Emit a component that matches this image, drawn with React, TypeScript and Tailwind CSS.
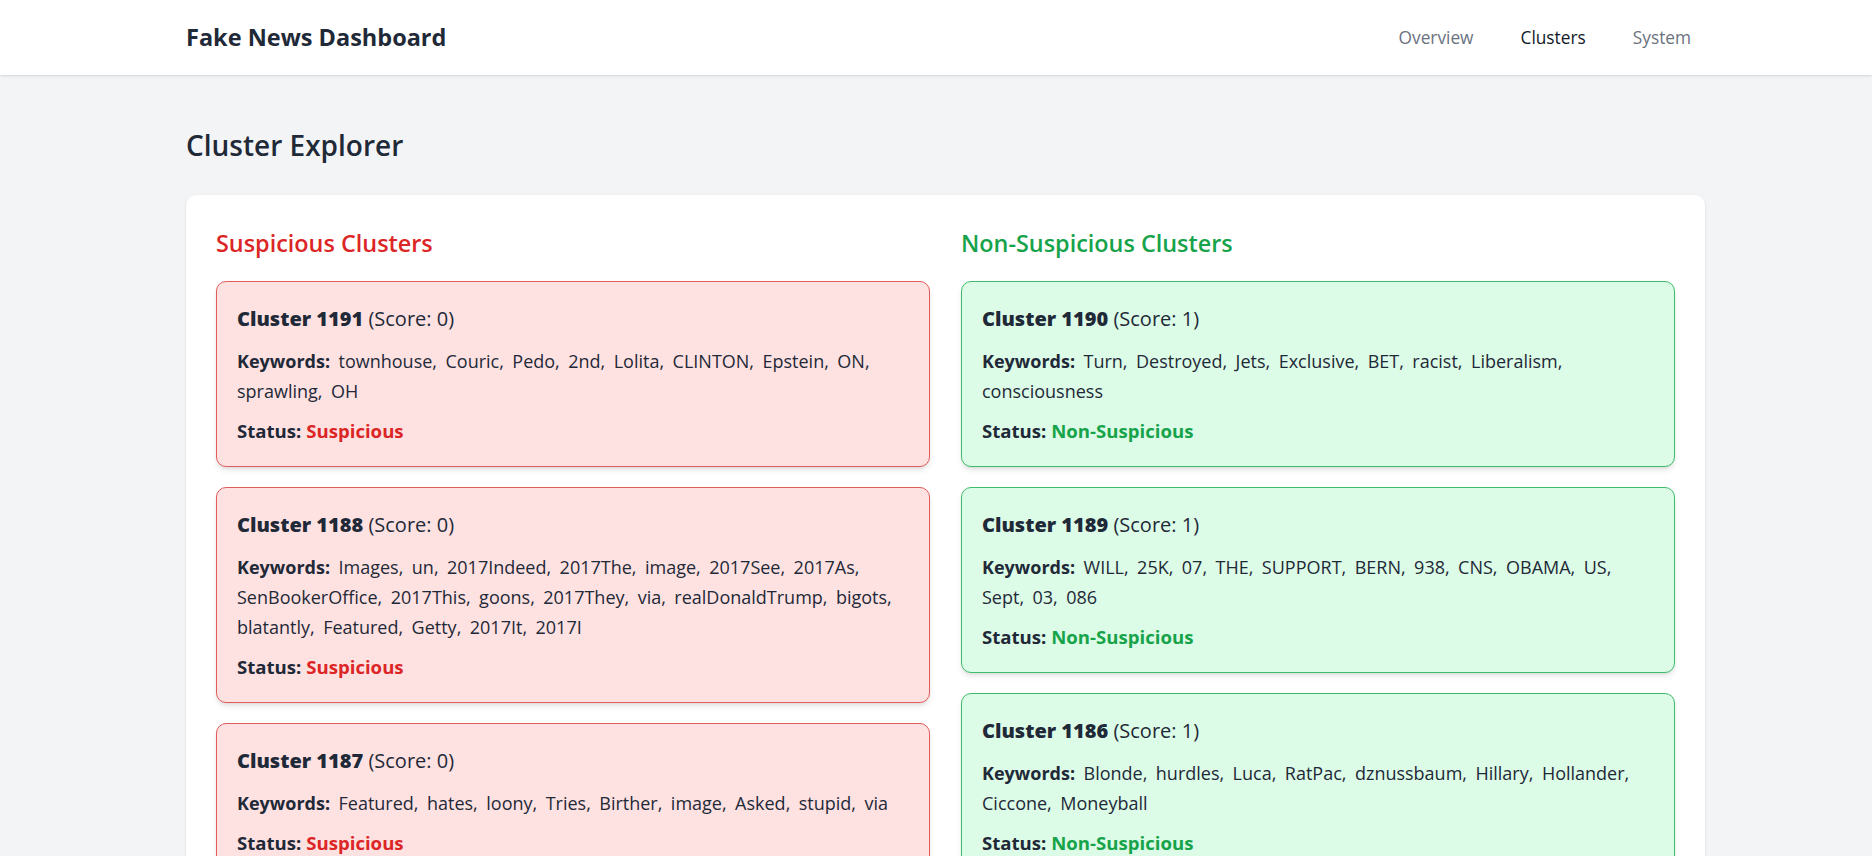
type Cluster = {
  id: number;
  score: number;
  keywords: string[];
};

const suspicious: Cluster[] = [
  {
    id: 1191,
    score: 0,
    keywords: ['townhouse', 'Couric', 'Pedo', '2nd', 'Lolita', 'CLINTON', 'Epstein', 'ON', 'sprawling', 'OH'],
  },
  {
    id: 1188,
    score: 0,
    keywords: [
      'Images', 'un', '2017Indeed', '2017The', 'image', '2017See', '2017As', 'SenBookerOffice', '2017This',
      'goons', '2017They', 'via', 'realDonaldTrump', 'bigots', 'blatantly', 'Featured', 'Getty', '2017It', '2017I',
    ],
  },
  {
    id: 1187,
    score: 0,
    keywords: ['Featured', 'hates', 'loony', 'Tries', 'Birther', 'image', 'Asked', 'stupid', 'via'],
  },
];

const nonSuspicious: Cluster[] = [
  {
    id: 1190,
    score: 1,
    keywords: ['Turn', 'Destroyed', 'Jets', 'Exclusive', 'BET', 'racist', 'Liberalism', 'consciousness'],
  },
  {
    id: 1189,
    score: 1,
    keywords: ['WILL', '25K', '07', 'THE', 'SUPPORT', 'BERN', '938', 'CNS', 'OBAMA', 'US', 'Sept', '03', '086'],
  },
  {
    id: 1186,
    score: 1,
    keywords: ['Blonde', 'hurdles', 'Luca', 'RatPac', 'dznussbaum', 'Hillary', 'Hollander', 'Ciccone', 'Moneyball'],
  },
];

function ClusterCard({ cluster, flagged }: { cluster: Cluster; flagged: boolean }) {
  return (
    <div
      className={`rounded-[10px] border p-5 shadow-md ${
        flagged ? 'border-[#e25c5c] bg-[#fee2e2]' : 'border-[#3dbd6b] bg-[#dcfce7]'
      }`}
    >
      <h3 className="mb-[10px] text-[20px] leading-[34px] text-[#1f2937]">
        <span className="font-extrabold">Cluster {cluster.id}</span> (Score: {cluster.score})
      </h3>
      <p className="mb-[10px] text-[18px] leading-[30px] text-[#1f2937] [word-spacing:3.8px]">
        <span className="font-bold">Keywords:</span> {cluster.keywords.join(', ')}
      </p>
      <p className="text-[18.6px] leading-[30px] text-[#1f2937]">
        <span className="font-bold">Status:</span>{' '}
        <span className={`font-bold ${flagged ? 'text-[#dc2626]' : 'text-[#16a34a]'}`}>
          {flagged ? 'Suspicious' : 'Non-Suspicious'}
        </span>
      </p>
    </div>
  );
}

export default function App() {
  return (
    <div className="min-h-screen bg-[#f3f4f6] font-['Segoe_UI','Open_Sans',sans-serif] text-[#1f2937]">
      <header className="h-[75px] bg-white shadow-sm">
        <div className="ml-[186px] flex h-full w-[1519px] items-center justify-between">
          <h1 className="text-[23.5px] font-bold text-[#1f2937]">Fake News Dashboard</h1>
          <nav className="flex items-center gap-[19px] text-[17.3px]">
            <a className="px-[14px] text-[#6b7280]">Overview</a>
            <a className="px-[14px] font-medium text-[#111827]">Clusters</a>
            <a className="px-[14px] text-[#6b7280]">System</a>
          </nav>
        </div>
      </header>

      <main className="ml-[186px] w-[1519px] pt-[51px]">
        <h2 className="mb-[31px] text-[28px] font-semibold leading-[38px] text-[#1f2937]">Cluster Explorer</h2>

        <div className="rounded-[10px] bg-white px-[30px] pt-[31px] pb-[30px] shadow">
          <div className="grid grid-cols-2 gap-x-[31px]">
            <section>
              <h2 className="mb-[21px] text-[23.4px] font-semibold leading-[34px] text-[#dc2626]">Suspicious Clusters</h2>
              <div className="flex flex-col gap-[20px]">
                {suspicious.map((c) => (
                  <ClusterCard key={c.id} cluster={c} flagged />
                ))}
              </div>
            </section>
            <section>
              <h2 className="mb-[21px] text-[23.4px] font-semibold leading-[34px] text-[#16a34a]">
                Non-Suspicious Clusters
              </h2>
              <div className="flex flex-col gap-[20px]">
                {nonSuspicious.map((c) => (
                  <ClusterCard key={c.id} cluster={c} flagged={false} />
                ))}
              </div>
            </section>
          </div>
        </div>
      </main>
    </div>
  );
}
